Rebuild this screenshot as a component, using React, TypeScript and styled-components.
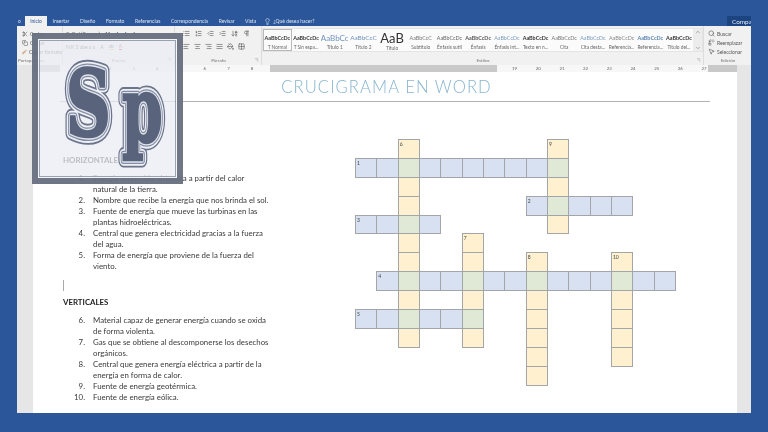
import styled, { createGlobalStyle } from "styled-components";
import {
    AlignCenter,
    AlignJustify,
    AlignLeft,
    AlignRight,
    ArrowDownAZ,
    Brush,
    ChevronDown,
    ChevronUp,
    Copy,
    Grid2x2,
    Indent,
    Lightbulb,
    List,
    ListOrdered,
    MousePointer2,
    Outdent,
    PaintBucket,
    Pilcrow,
    Replace,
    Scissors,
    Search,
    User,
} from "lucide-react";

const GlobalStyle = createGlobalStyle`
    html, body {
        margin: 0;
        padding: 0;
        background: #2b579a;
    }
    * {
        box-sizing: border-box;
    }
`;

const Screen = styled.div`
    position: relative;
    width: 768px;
    height: 432px;
    overflow: hidden;
    display: flex;
    flex-direction: column;
    padding: 16px 17px 19px 17px;
    background: #2b579a;
    font-family: Lato, "Liberation Sans", sans-serif;
    color: #333;
    filter: blur(0.35px);
`;

const TabBar = styled.div`
    height: 10px;
    flex: none;
    display: flex;
    align-items: stretch;
    font-size: 5px;
    color: #dbe4f1;
`;

const Tab = styled.div<{ $active?: boolean; $compact?: boolean }>`
    display: flex;
    align-items: center;
    padding: 0 ${(p) => (p.$compact ? 1 : 5.3)}px;
    background: ${(p) => (p.$active ? "#f1f1f1" : "transparent")};
    color: ${(p) => (p.$active ? "#2b579a" : "#dbe4f1")};
    margin-left: ${(p) => (p.$active ? "3px" : "0")};
`;

const TellMe = styled.div`
    display: flex;
    align-items: center;
    gap: 2px;
    margin-left: 3px;
`;

const ShareButton = styled.div`
    margin-left: auto;
    width: 24px;
    overflow: hidden;
    display: flex;
    align-items: center;
    gap: 2px;
    padding-left: 3px;
    background: #1c4480;
    color: #e4ebf5;
    white-space: nowrap;
    font-size: 6.4px;
`;

const Ribbon = styled.div`
    height: 39px;
    flex: none;
    display: flex;
    background: #f1f1f1;
    font-size: 5px;
    color: #555;
`;

const Group = styled.div<{ $width: number; $last?: boolean }>`
    width: ${(p) => p.$width}px;
    flex: none;
    display: flex;
    flex-direction: column;
    border-right: ${(p) => (p.$last ? "none" : "1px solid #dcdcdc")};
`;

const ToolStack = styled.div<{ $left: number; $gap: number }>`
    display: flex;
    flex-direction: column;
    gap: ${(p) => p.$gap}px;
    padding: 3px 0 0 ${(p) => p.$left}px;
`;

const GroupLabel = styled.div<{ $start?: boolean; $launcher?: boolean }>`
    position: relative;
    height: 8px;
    margin: auto 0 1px 0;
    padding-left: 1px;
    text-align: ${(p) => (p.$start ? "left" : "center")};
    font-size: 4.6px;
    line-height: 8px;
    color: #777;

    &::after {
        content: "${(p) => (p.$launcher ? "◹" : "")}";
        position: absolute;
        right: 3px;
        top: 0;
        font-size: 4px;
    }
`;

const ToolRow = styled.div<{ $gap?: number }>`
    display: flex;
    align-items: center;
    gap: ${(p) => p.$gap ?? 2}px;
    height: 9px;
    white-space: nowrap;
`;

const FormatMark = styled.span<{ $color?: string; $bar?: string }>`
    color: ${(p) => p.$color ?? "#555"};
    border-bottom: ${(p) => (p.$bar ? `1px solid ${p.$bar}` : "none")};
`;

const Gallery = styled.div`
    height: 24px;
    flex: none;
    display: flex;
    margin-top: 2px;
    background: #fbfbfb;
    border: 1px solid #e4e4e4;
`;

const StyleCard = styled.div<{ $selected?: boolean }>`
    width: 28.7px;
    flex: none;
    display: flex;
    flex-direction: column;
    align-items: center;
    padding-top: 1px;
    overflow: hidden;
    white-space: nowrap;
    border: 1px solid ${(p) => (p.$selected ? "#b8b8b8" : "transparent")};
`;

const StylePreview = styled.div<{ $size: number; $color: string; $bold?: boolean }>`
    height: 14px;
    display: flex;
    align-items: center;
    font-size: ${(p) => p.$size}px;
    color: ${(p) => p.$color};
    font-weight: ${(p) => (p.$bold ? 700 : 400)};
`;

const StyleName = styled.div`
    font-size: 4.8px;
    color: #666;
`;

const GalleryScroll = styled.div`
    flex: 1;
    display: flex;
    flex-direction: column;
    justify-content: space-between;
    align-items: center;
    background: #ececec;
    color: #666;
`;

const Workspace = styled.div`
    flex: 1;
    min-height: 0;
    display: flex;
    flex-direction: column;
    padding: 0 14px 0 16px;
    background: #e6e6e6;
`;

const Ruler = styled.div`
    height: 7px;
    flex: none;
    display: flex;
    background: #c9c9c9;
    font-size: 4.4px;
    color: #666;
`;

const RulerGap = styled.div<{ $width: number }>`
    width: ${(p) => p.$width}px;
    flex: none;
`;

const RulerPart = styled.div<{ $width: number; $pad: number }>`
    width: ${(p) => p.$width}px;
    flex: none;
    display: flex;
    align-items: center;
    padding-left: ${(p) => p.$pad}px;
    background: #f7f7f7;
`;

const RulerMark = styled.span`
    width: 23.7px;
    flex: none;
`;

const Page = styled.div`
    flex: 1;
    min-height: 0;
    display: flex;
    flex-direction: column;
    background: #fff;
`;

const Title = styled.div`
    height: 24px;
    margin: 6px 27px 0 27px;
    padding-left: 3px;
    text-align: center;
    border-bottom: 1px solid #b4b4b4;
    font-size: 16.6px;
    line-height: 18px;
    font-weight: 300;
    letter-spacing: 1.1px;
    color: #86b4cf;
`;

const Columns = styled.div`
    flex: 1;
    min-height: 0;
    display: flex;
    padding: 37px 0 0 30px;
`;

const TextColumn = styled.div`
    width: 292px;
    flex: none;
    font-size: 7.85px;
    line-height: 11px;
    color: #3a3a3a;
`;

const Heading = styled.div<{ $top: number }>`
    margin: ${(p) => p.$top}px 0 7px 0;
    font-weight: 700;
    color: #222;
`;

const Clue = styled.div`
    display: grid;
    grid-template-columns: 22px 177px;
    column-gap: 8px;
`;

const ClueNumber = styled.div`
    text-align: right;
`;

const Caret = styled.div`
    width: 1px;
    height: 11px;
    margin-top: 8px;
    background: #aaa;
`;

const Crossword = styled.div`
    display: grid;
    grid-template-columns: repeat(15, 21.33px);
    grid-template-rows: repeat(13, 18.9px);
`;

const Cell = styled.div<{ $kind: "across" | "down" | "both"; $col: number; $row: number }>`
    grid-column: ${(p) => p.$col + 1};
    grid-row: ${(p) => p.$row + 1};
    margin: 0 -1px -1px 0;
    padding: 1px 0 0 1px;
    border: 1px solid #a3a6a8;
    font-size: 5px;
    line-height: 6px;
    color: #444;
    background: ${(p) =>
        p.$kind === "both" ? "#dfe9d6" : p.$kind === "across" ? "#d8e1f1" : "#fff0cf"};
`;

const Watermark = styled.div`
    position: absolute;
    left: 32px;
    top: 33px;
    width: 151px;
    height: 151px;
    border: 6px solid rgba(86, 94, 112, 0.84);
    background: rgba(234, 237, 245, 0.76);
    box-shadow: inset 0 0 0 1px #f4f5f9, inset 0 0 0 2px rgba(120, 128, 146, 0.7);
`;

const LogoSvg = styled.svg`
    display: block;
    font-family: "DejaVu Serif", serif;
    font-weight: 700;
    filter: blur(0.5px);
`;

const acrossWords = [
    { n: 1, row: 1, from: 0, to: 9 },
    { n: 2, row: 3, from: 8, to: 12 },
    { n: 3, row: 4, from: 0, to: 3 },
    { n: 4, row: 7, from: 1, to: 14 },
    { n: 5, row: 9, from: 0, to: 5 },
];

const downWords = [
    { n: 6, col: 2, from: 0, to: 10 },
    { n: 7, col: 5, from: 5, to: 10 },
    { n: 8, col: 8, from: 6, to: 12 },
    { n: 9, col: 9, from: 0, to: 4 },
    { n: 10, col: 12, from: 6, to: 11 },
];

type CellInfo = { col: number; row: number; kind: "across" | "down" | "both"; n?: number };

const buildCells = () => {
    const cells = new Map<string, CellInfo>();
    acrossWords.forEach((w) => {
        for (let col = w.from; col <= w.to; col++) {
            cells.set(`${col}-${w.row}`, { col, row: w.row, kind: "across", n: col === w.from ? w.n : undefined });
        }
    });
    downWords.forEach((w) => {
        for (let row = w.from; row <= w.to; row++) {
            const key = `${w.col}-${row}`;
            const hit = cells.get(key);
            if (hit) hit.kind = "both";
            else cells.set(key, { col: w.col, row, kind: "down", n: row === w.from ? w.n : undefined });
        }
    });
    return Array.from(cells.values());
};

const horizontal = [
    ["1.", "Energía renovable obtenida a partir del calor natural de la tierra."],
    ["2.", "Nombre que recibe la energía que nos brinda el sol."],
    ["3.", "Fuente de energía que mueve las turbinas en las plantas hidroeléctricas."],
    ["4.", "Central que genera electricidad gracias a la fuerza del agua."],
    ["5.", "Forma de energía que proviene de la fuerza del viento."],
];

const vertical = [
    ["6.", "Material capaz de generar energía cuando se oxida de forma violenta."],
    ["7.", "Gas que se obtiene al descomponerse los desechos orgánicos."],
    ["8.", "Central que genera energía eléctrica a partir de la energía en forma de calor."],
    ["9.", "Fuente de energía geotérmica."],
    ["10.", "Fuente de energía eólica."],
];

const styleCards = [
    { label: "T Normal", text: "AaBbCcDc", size: 5.4, color: "#333", bold: true, selected: true },
    { label: "T Sin espa...", text: "AaBbCcDc", size: 5.4, color: "#333", bold: true },
    { label: "Título 1", text: "AaBbCc", size: 8, color: "#6f93bd" },
    { label: "Título 2", text: "AaBbCcC", size: 6.4, color: "#6f93bd" },
    { label: "Título", text: "AaB", size: 13, color: "#333" },
    { label: "Subtítulo", text: "AaBbCcC", size: 5.4, color: "#777" },
    { label: "Énfasis sutil", text: "AaBbCcDc", size: 5.4, color: "#666" },
    { label: "Énfasis", text: "AaBbCcDc", size: 5.4, color: "#555", bold: true },
    { label: "Énfasis int...", text: "AaBbCcDc", size: 5.4, color: "#7d9cc4" },
    { label: "Texto en n...", text: "AaBbCcDc", size: 5.4, color: "#333", bold: true },
    { label: "Cita", text: "AaBbCcDc", size: 5.4, color: "#777" },
    { label: "Cita desta...", text: "AaBbCcDc", size: 5.4, color: "#7d9cc4" },
    { label: "Referencia...", text: "AaBbCcDc", size: 5.4, color: "#888" },
    { label: "Referencia...", text: "AaBbCcDc", size: 5.4, color: "#5b84b5", bold: true },
    { label: "Título del...", text: "AaBbCcDc", size: 5.4, color: "#333", bold: true },
];

const LogoLetter = ({ x, y, sx, sy, children }: { x: number; y: number; sx: number; sy: number; children: string }) => (
    <g transform={`translate(${x} ${y}) scale(${sx} ${sy})`}>
        <text fontSize="100" fill="none" stroke="#6b748a" strokeWidth="17" strokeLinejoin="round">{children}</text>
        <text fontSize="100" fill="none" stroke="#eef0f6" strokeWidth="13" strokeLinejoin="round">{children}</text>
        <text fontSize="100" fill="none" stroke="#838ca2" strokeWidth="9" strokeLinejoin="round">{children}</text>
        <text fontSize="100" fill="none" stroke="#dfe3ec" strokeWidth="6" strokeLinejoin="round">{children}</text>
        <text fontSize="100" fill="#59637c" stroke="#59637c" strokeWidth="3">{children}</text>
    </g>
);

export default function App() {
    const cells = buildCells();
    return (
        <Screen>
            <GlobalStyle />
            <TabBar>
                <Tab $compact>o</Tab>
                <Tab $active>Inicio</Tab>
                <Tab>Insertar</Tab>
                <Tab>Diseño</Tab>
                <Tab>Formato</Tab>
                <Tab>Referencias</Tab>
                <Tab>Correspondencia</Tab>
                <Tab>Revisar</Tab>
                <Tab>Vista</Tab>
                <TellMe>
                    <Lightbulb size={7} />
                    ¿Qué desea hacer?
                </TellMe>
                <ShareButton>
                    <User size={7} />
                    Compartir
                </ShareButton>
            </TabBar>

            <Ribbon>
                <Group $width={46}>
                    <ToolStack $left={5} $gap={0}>
                        <ToolRow><Scissors size={6} />Cortar</ToolRow>
                        <ToolRow><Copy size={6} />Copiar</ToolRow>
                        <ToolRow><Brush size={6} color="#b8703a" />Copiar formato</ToolRow>
                    </ToolStack>
                    <GroupLabel $start>Portapapeles</GroupLabel>
                </Group>

                <Group $width={112}>
                    <ToolStack $left={3} $gap={4}>
                        <ToolRow $gap={5}>
                            Calibri (Cuerpo) <span>11</span> <span>A</span> <span>A</span> <span>Aa</span>
                        </ToolRow>
                        <ToolRow $gap={5}>
                            <FormatMark>N K S abe x x</FormatMark>
                            <FormatMark>A</FormatMark>
                            <FormatMark $bar="#e8d44a">ab</FormatMark>
                            <FormatMark $color="#c9483b" $bar="#d8362a">A</FormatMark>
                        </ToolRow>
                    </ToolStack>
                    <GroupLabel $launcher>Fuente</GroupLabel>
                </Group>

                <Group $width={87}>
                    <ToolStack $left={8} $gap={4}>
                        <ToolRow $gap={5}>
                            <List size={7} />
                            <ListOrdered size={7} />
                            <Outdent size={7} />
                            <Indent size={7} />
                            <ArrowDownAZ size={7} />
                            <Pilcrow size={7} />
                        </ToolRow>
                        <ToolRow $gap={4}>
                            <AlignLeft size={7} />
                            <AlignCenter size={7} />
                            <AlignRight size={7} />
                            <AlignJustify size={7} />
                            <PaintBucket size={7} />
                            <Grid2x2 size={7} />
                        </ToolRow>
                    </ToolStack>
                    <GroupLabel $launcher>Párrafo</GroupLabel>
                </Group>

                <Group $width={442}>
                    <Gallery>
                        {styleCards.map((c, i) => (
                            <StyleCard key={i} $selected={c.selected}>
                                <StylePreview $size={c.size} $color={c.color} $bold={c.bold}>{c.text}</StylePreview>
                                <StyleName>{c.label}</StyleName>
                            </StyleCard>
                        ))}
                        <GalleryScroll>
                            <ChevronUp size={6} />
                            <ChevronDown size={6} />
                        </GalleryScroll>
                    </Gallery>
                    <GroupLabel $launcher>Estilos</GroupLabel>
                </Group>

                <Group $width={47} $last>
                    <ToolStack $left={4} $gap={0}>
                        <ToolRow><Search size={7} />Buscar</ToolRow>
                        <ToolRow><Replace size={7} />Reemplazar</ToolRow>
                        <ToolRow><MousePointer2 size={7} />Seleccionar</ToolRow>
                    </ToolStack>
                    <GroupLabel>Edición</GroupLabel>
                </Group>
            </Ribbon>

            <Workspace>
                <Ruler>
                    <RulerGap $width={27} />
                    <RulerPart $width={210} $pad={25}>
                        {[1, 2, 3, 4, 5, 6, 7, 8].map((n) => (
                            <RulerMark key={n}>{n}</RulerMark>
                        ))}
                    </RulerPart>
                    <RulerGap $width={227} />
                    <RulerPart $width={211} $pad={15}>
                        {[19, 20, 21, 22, 23, 24, 25, 26, 27].map((n) => (
                            <RulerMark key={n}>{n}</RulerMark>
                        ))}
                    </RulerPart>
                </Ruler>

                <Page>
                    <Title>CRUCIGRAMA EN WORD</Title>
                    <Columns>
                        <TextColumn>
                            <Heading $top={16}>HORIZONTALES</Heading>
                            {horizontal.map(([n, text]) => (
                                <Clue key={n}>
                                    <ClueNumber>{n}</ClueNumber>
                                    <div>{text}</div>
                                </Clue>
                            ))}
                            <Caret />
                            <Heading $top={6}>VERTICALES</Heading>
                            {vertical.map(([n, text]) => (
                                <Clue key={n}>
                                    <ClueNumber>{n}</ClueNumber>
                                    <div>{text}</div>
                                </Clue>
                            ))}
                        </TextColumn>
                        <Crossword>
                            {cells.map((c) => (
                                <Cell key={`${c.col}-${c.row}`} $kind={c.kind} $col={c.col} $row={c.row}>
                                    {c.n}
                                </Cell>
                            ))}
                        </Crossword>
                    </Columns>
                </Page>
            </Workspace>

            <Watermark>
                <LogoSvg width="139" height="139" viewBox="0 0 139 139">
                    <LogoLetter x={28} y={97} sx={0.62} sy={0.91}>S</LogoLetter>
                    <LogoLetter x={84} y={102} sx={0.58} sy={0.89}>p</LogoLetter>
                </LogoSvg>
            </Watermark>
        </Screen>
    );
}
